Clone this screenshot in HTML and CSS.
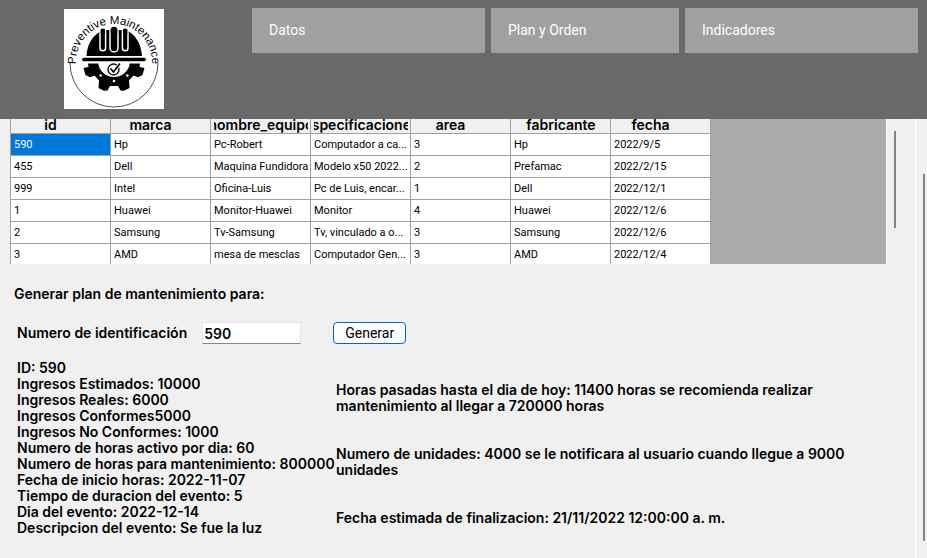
FILE: index.html
```html
<!DOCTYPE html>
<html lang="es">
<head>
<meta charset="utf-8">
<title>Preventive Maintenance</title>
<link rel="stylesheet" href="styles.css">
</head>
<body>
<header class="top">
  <svg class="logo" viewBox="0 0 200 200" role="img" aria-label="Preventive Maintenance">
    <defs><path id="arc" d="M24 112L24 106A76 76 0 1 1 176 106L176 112"/></defs>
    <rect width="200" height="200" fill="#fff"/>
    <path d="M12 108A88 88 0 0 0 188 108" fill="none" stroke="#222" stroke-width="1.600"/>
    <text class="logo-text"><textPath href="#arc" startOffset="50%" text-anchor="middle">Preventive Maintenance</textPath></text>
    <svg viewBox="0 0 100 100" width="200" height="200">
    <path d="M22.500 47C23 34 30 25 39 21H62C71 25 77 34 78 47Z"/>
    <g fill="#000" stroke="#fff" stroke-width="1.500">
      <path d="M36 20V39a2.800 2.800 0 0 0 5.600 0V20"/>
      <path d="M46 20V39a4 4 0 0 0 8 0V20"/>
      <path d="M58.400 20V39a2.800 2.800 0 0 0 5.600 0V20"/>
    </g>
    <path d="M36.700 25V21.500a2.100 2.100 0 0 1 4.200 0V25zM46.700 24V21a3.300 3.300 0 0 1 6.600 0V24zM59.100 25V21.500a2.100 2.100 0 0 1 4.200 0V25z"/>
    <rect x="18" y="48.700" width="64" height="3.600" rx="1.800"/>
    <path d="M24 54.500H34.300C35 62 42 68 50 68S65 62 65.700 54.500H76L75.500 58 80.500 59 78.500 66 74 68.300 69.500 66.500 65 71.500 65.500 79 60 81.700 56.500 81.500 54 77H46L43.500 81.500 40 81.700 34.500 79 35 71.500 30.500 66.500 26 68.300 21.500 66 19.500 59 24.500 58Z"/>
    <g fill="#fff"><circle cx="36.700" cy="66.500" r="1.300"/><circle cx="50" cy="72" r="1.300"/><circle cx="63.300" cy="66.500" r="1.300"/></g>
    <circle cx="49.500" cy="60.500" r="5.500" fill="#fff" stroke="#000" stroke-width="1.300"/>
    <path d="M46.500 59.500L49.500 63 56 54.500" fill="none" stroke="#fff" stroke-width="3"/>
    <path d="M46.500 59.500L49.500 63 56 54.500" fill="none" stroke="#000" stroke-width="1.700"/>
    </svg>
  </svg>
  <nav class="menu">
    <a href="#datos">Datos</a>
    <a href="#plan">Plan y Orden</a>
    <a href="#indicadores">Indicadores</a>
  </nav>
</header>
<div class="body">
  <main class="page">
    <div class="grid-row">
      <div class="grid">
        <table>
          <thead><tr>
            <th><div>id</div></th><th><div>marca</div></th><th class="full"><div>nombre_equipo</div></th><th class="full"><div>especificaciones</div></th><th><div>area</div></th><th class="full"><div>fabricante</div></th><th><div>fecha</div></th>
          </tr></thead>
          <tbody>
            <tr><td class="selected">590</td><td>Hp</td><td>Pc-Robert</td><td>Computador a ca...</td><td>3</td><td>Hp</td><td>2022/9/5</td></tr>
            <tr><td>455</td><td>Dell</td><td>Maquina Fundidora</td><td>Modelo x50 2022...</td><td>2</td><td>Prefamac</td><td>2022/2/15</td></tr>
            <tr><td>999</td><td>Intel</td><td>Oficina-Luis</td><td>Pc de Luis, encar...</td><td>1</td><td>Dell</td><td>2022/12/1</td></tr>
            <tr><td>1</td><td>Huawei</td><td>Monitor-Huawei</td><td>Monitor</td><td>4</td><td>Huawei</td><td>2022/12/6</td></tr>
            <tr><td>2</td><td>Samsung</td><td>Tv-Samsung</td><td>Tv, vinculado a o...</td><td>3</td><td>Samsung</td><td>2022/12/6</td></tr>
            <tr><td>3</td><td>AMD</td><td>mesa de mesclas</td><td>Computador Gen...</td><td>3</td><td>AMD</td><td>2022/12/4</td></tr>
          </tbody>
        </table>
      </div>
      <div class="rail"><div class="thumb thumb-grid"></div></div>
    </div>
    <h1>Generar plan de mantenimiento para:</h1>
    <form class="form">
      <label for="ident">Numero de identificación</label>
      <input id="ident" type="text" value="590">
      <button type="button">Generar</button>
    </form>
    <div class="results">
      <div class="summary">
        <p>ID: 590</p>
        <p>Ingresos Estimados: 10000</p>
        <p>Ingresos Reales: 6000</p>
        <p>Ingresos Conformes5000</p>
        <p>Ingresos No Conformes: 1000</p>
        <p>Numero de horas activo por dia: 60</p>
        <p>Numero de horas para mantenimiento: 800000</p>
        <p>Fecha de inicio horas: 2022-11-07</p>
        <p>Tiempo de duracion del evento: 5</p>
        <p>Dia del evento: 2022-12-14</p>
        <p>Descripcion del evento: Se fue la luz</p>
      </div>
      <div class="forecast">
        <p>Horas pasadas hasta el dia de hoy: 11400 horas se recomienda realizar mantenimiento al llegar a 720000 horas</p>
        <p>Numero de unidades: 4000 se le notificara al usuario cuando llegue a 9000 unidades</p>
        <p>Fecha estimada de finalizacion: 21/11/2022 12:00:00 a. m.</p>
      </div>
    </div>
  </main>
  <div class="rail page-rail"><div class="thumb thumb-page"></div></div>
</div>
</body>
</html>
```
FILE: styles.css
```css
* { box-sizing: border-box; }
body {
  margin: 0;
  min-height: 100vh;
  display: flex;
  flex-direction: column;
  background: #f0f0f0;
  color: #000;
  font: 600 14px/16px Inter, sans-serif;
}
p, h1 { margin: 0; font-size: 14px; font-weight: 600; line-height: 16px; }

.top {
  display: flex;
  align-items: flex-start;
  gap: 88px;
  padding: 8px 9px 10px 64px;
  background: #696969;
}
.logo { flex: none; width: 100px; height: 100px; margin-top: 1px; }
.logo-text { font: 23px "Liberation Sans", Arial, sans-serif; }
.menu {
  flex: 1;
  display: grid;
  grid-template-columns: 233fr 188fr 233fr;
  gap: 6px;
}
.menu a {
  padding: 0 17px;
  background: #a0a0a0;
  color: #fff;
  font: 14px/45px Roboto, sans-serif;
  text-decoration: none;
}

.body { flex: 1; display: flex; }
.page { flex: 1; min-width: 0; }
.rail { flex: none; display: flex; flex-direction: column; }
.page-rail { width: 12px; padding: 55px 2px 17px 7px; border-left: 1px solid #fff; }
.thumb { width: 2px; background: #858585; }
.thumb-page { flex: 1; }
.thumb-grid { height: 97px; }

.grid-row { display: flex; padding: 0 19px 0 10px; }
.grid { flex: 1; height: 145px; overflow: hidden; background: #ababab; border-right: 1px solid #fff; }
.grid-row .rail { width: 9px; padding: 12px 0 0 7px; }
table { width: 701px; table-layout: fixed; border-collapse: separate; border-spacing: 0; }
th, td { padding: 0; border: 0 solid #a0a0a0; border-width: 0 1px 1px 0; text-align: left; }
th:first-child, td:first-child { width: 101px; border-left-width: 1px; }
th { height: 15px; padding: 0 22px 0 2px; background: #f0f0f0; font-weight: 600; }
th.full { padding: 0 2px 0 3px; }
th div { display: flex; justify-content: center; height: 14px; line-height: 12px; overflow: hidden; white-space: nowrap; }
td {
  height: 22px;
  padding: 0 3px;
  background: #fff;
  font: 11px/21px Roboto, sans-serif;
  white-space: nowrap;
  overflow: hidden;
}
td.selected { background: #0078d7; color: #fff; }

h1 { padding: 22px 14px 0; }
.form { display: flex; align-items: center; gap: 15px; margin: 20px 17px 0; }
.form input {
  width: 99px;
  height: 22px;
  padding: 0 1px;
  border: 1px solid #e6e6e6;
  border-bottom-color: #858585;
  background: #fff;
  font: inherit;
}
.form button {
  width: 73px;
  height: 22px;
  margin-left: 17px;
  padding: 0;
  border: 1px solid #0067c0;
  border-radius: 4px;
  background: #fdfdfd;
  font: 14px/16px Roboto, sans-serif;
}
.results { display: flex; gap: 3px; padding: 16px 17px 0; }
.summary { flex: none; width: 316px; white-space: nowrap; }
.forecast { flex: 1; max-width: 530px; display: grid; grid-auto-rows: 32px; align-content: start; gap: 32px; padding-top: 22px; }
```
